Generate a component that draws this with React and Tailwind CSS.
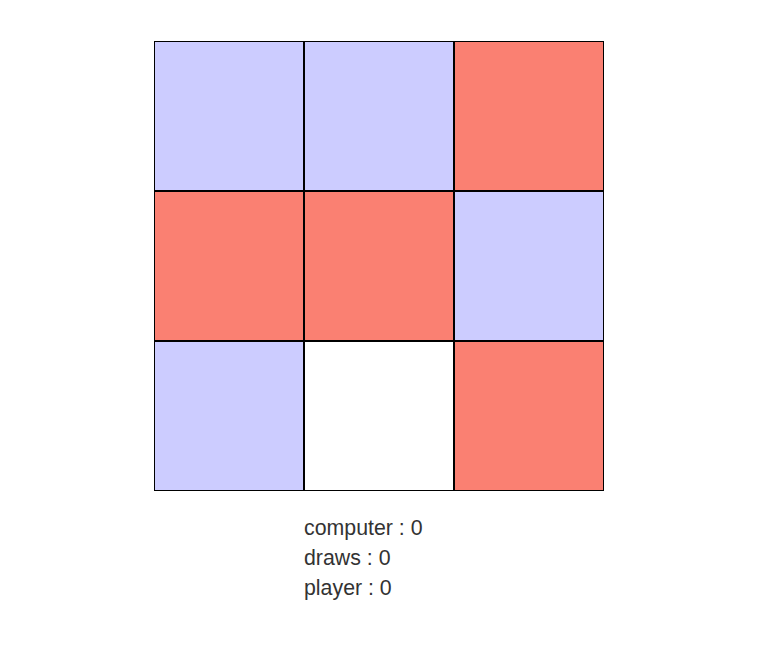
import React from 'react';

const board = [
  'bg-[#ccccff]', 'bg-[#ccccff]', 'bg-[#fa8072]',
  'bg-[#fa8072]', 'bg-[#fa8072]', 'bg-[#ccccff]',
  'bg-[#ccccff]', 'bg-white', 'bg-[#fa8072]',
];

const App = () => {
  return (
    <div className="min-h-screen w-full bg-white pt-[41px] font-['Liberation_Sans',Arial,sans-serif] text-[#333333]">
      {/* Board */}
      <div className="ml-[154px] grid w-[450px] grid-cols-3">
        {board.map((cls, i) => (
          <div key={i} className={`h-[150px] w-[150px] border border-black ${cls}`} />
        ))}
      </div>

      {/* Score */}
      <div className="ml-[304px] mt-[22px] text-[21.33px] leading-[30px]">
        <div>computer : 0</div>
        <div>draws : 0</div>
        <div>player : 0</div>
      </div>
    </div>
  );
};

export default App;
